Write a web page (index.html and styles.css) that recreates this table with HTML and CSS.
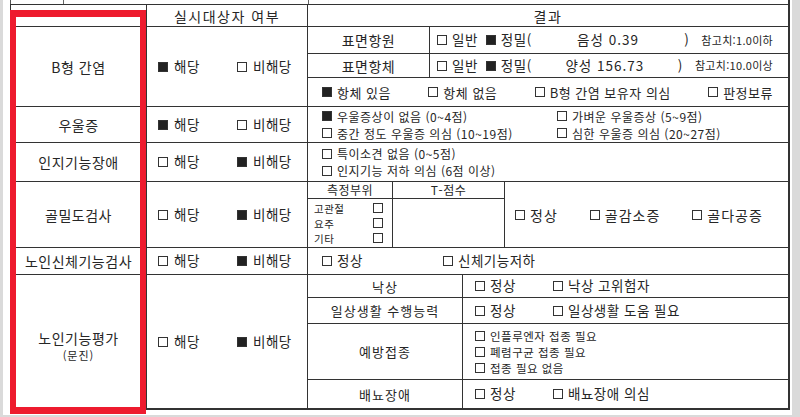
FILE: index.html
```html
<!DOCTYPE html>
<html lang="ko">
<head>
<meta charset="utf-8">
<title>검사 결과</title>
<link rel="stylesheet" href="styles.css">
</head>
<body>
<div class="page">
  <div class="strip"><i></i><i></i><i></i></div>
  <div class="form">
    <div class="c"></div>
    <div class="c head">실시대상자 여부</div>
    <div class="c head r3">결과</div>

    <div class="c lab">B형 간염</div>
    <div class="c yn"><span class="opt"><i class="cb on"></i>해당</span><span class="opt"><i class="cb"></i>비해당</span></div>
    <div class="c r3 sub">
      <div class="hb">
        <div class="sl">표면항원</div>
        <div class="sv">
          <span class="opt o1"><i class="cb"></i>일반</span><span class="opt"><i class="cb on"></i>정밀(</span>
          <span class="num">음성 0.39</span><span class="cp">)</span><span class="ref">참고치:1.0이하</span>
        </div>
        <div class="sl">표면항체</div>
        <div class="sv">
          <span class="opt o1"><i class="cb"></i>일반</span><span class="opt"><i class="cb on"></i>정밀(</span>
          <span class="num">양성 156.73</span><span class="cp">)</span><span class="ref">참고치:10.0이상</span>
        </div>
        <div class="hopts">
          <span class="opt"><i class="cb on"></i>항체 있음</span>
          <span class="opt"><i class="cb"></i>항체 없음</span>
          <span class="opt"><i class="cb"></i>B형 간염 보유자 의심</span>
          <span class="opt"><i class="cb"></i>판정보류</span>
        </div>
      </div>
    </div>

    <div class="c lab">우울증</div>
    <div class="c yn"><span class="opt"><i class="cb on"></i>해당</span><span class="opt"><i class="cb"></i>비해당</span></div>
    <div class="c r3 dep">
      <span class="opt"><i class="cb on"></i>우울증상이 없음 (0~4점)</span>
      <span class="opt"><i class="cb"></i>가벼운 우울증상 (5~9점)</span>
      <span class="opt"><i class="cb"></i>중간 정도 우울증 의심 (10~19점)</span>
      <span class="opt"><i class="cb"></i>심한 우울증 의심 (20~27점)</span>
    </div>

    <div class="c lab">인지기능장애</div>
    <div class="c yn"><span class="opt"><i class="cb"></i>해당</span><span class="opt"><i class="cb on"></i>비해당</span></div>
    <div class="c r3 cog">
      <span class="opt"><i class="cb"></i>특이소견 없음 (0~5점)</span>
      <span class="opt"><i class="cb"></i>인지기능 저하 의심 (6점 이상)</span>
    </div>

    <div class="c lab">골밀도검사</div>
    <div class="c yn"><span class="opt"><i class="cb"></i>해당</span><span class="opt"><i class="cb on"></i>비해당</span></div>
    <div class="c r3 sub">
      <div class="bone">
        <div class="bh">측정부위</div>
        <div class="bh">T-점수</div>
        <div class="bopts">
          <span class="opt"><i class="cb"></i>정상</span>
          <span class="opt"><i class="cb"></i>골감소증</span>
          <span class="opt"><i class="cb"></i>골다공증</span>
        </div>
        <div class="sites">
          <div class="site"><span>고관절</span><i class="cb"></i></div>
          <div class="site"><span>요주</span><i class="cb"></i></div>
          <div class="site"><span>기타</span><i class="cb"></i></div>
        </div>
        <div class="tscore"></div>
      </div>
    </div>

    <div class="c lab">노인신체기능검사</div>
    <div class="c yn"><span class="opt"><i class="cb"></i>해당</span><span class="opt"><i class="cb on"></i>비해당</span></div>
    <div class="c r3 phys">
      <span class="opt"><i class="cb"></i>정상</span>
      <span class="opt"><i class="cb"></i>신체기능저하</span>
    </div>

    <div class="c lab last elder">
      <span class="el1">노인기능평가</span>
      <span class="el2">(문진)</span>
    </div>
    <div class="c yn last"><span class="opt"><i class="cb"></i>해당</span><span class="opt"><i class="cb on"></i>비해당</span></div>
    <div class="c r3 last sub">
      <div class="old">
        <div class="ol">낙상</div>
        <div class="ov"><span class="opt"><i class="cb"></i>정상</span><span class="opt"><i class="cb"></i>낙상 고위험자</span></div>
        <div class="ol">일상생활 수행능력</div>
        <div class="ov"><span class="opt"><i class="cb"></i>정상</span><span class="opt"><i class="cb"></i>일상생활 도움 필요</span></div>
        <div class="ol">예방접종</div>
        <div class="ov vac">
          <span class="opt"><i class="cb"></i>인플루엔자 접종 필요</span>
          <span class="opt"><i class="cb"></i>폐렴구균 접종 필요</span>
          <span class="opt"><i class="cb"></i>접종 필요 없음</span>
        </div>
        <div class="ol end">배뇨장애</div>
        <div class="ov end"><span class="opt"><i class="cb"></i>정상</span><span class="opt"><i class="cb"></i>배뇨장애 의심</span></div>
      </div>
    </div>
  </div>
  <div class="highlight"></div>
</div>
</body>
</html>
```

FILE: styles.css
```css
* { box-sizing: border-box; }

body {
  margin: 0;
  padding: 0 8px 2px 3px;
  background: #dadada;
  font-family: "Noto Sans CJK KR", "Noto Sans", sans-serif;
  color: #262626;
}

.page {
  position: relative;
  width: 789px;
  height: 415px;
  background: #fff;
  padding-left: 7px;
}

.strip {
  display: grid;
  grid-template-columns: 53px 245px 1fr;
  width: 780px;
  height: 4px;
  border-left: 1px solid #555;
}
.strip i { border-right: 1px solid #666; }
.strip i:last-child { border-right: 2px solid #333; }

.form {
  display: grid;
  width: 780px;
  grid-template-columns: 136px 161px 1fr;
  grid-template-rows: 22px 80px 36px 39px 66px 27px 133px;
  border: 1px solid #333;
  border-right-width: 2px;
  border-bottom-width: 2px;
}

.c {
  border-right: 1px solid #333;
  border-bottom: 1px solid #333;
  display: flex;
  align-items: center;
  justify-content: center;
  font-size: 14px;
  line-height: 1;
  white-space: nowrap;
}
.c.r3 { border-right: 0; }
.c.last { border-bottom: 0; }

.head { letter-spacing: 1.5px; }

.lab { letter-spacing: 0.5px; }

.elder {
  flex-direction: column;
  padding-top: 8px;
}
.el1 { font-size: 14px; line-height: 20px; }
.el2 { font-size: 11px; line-height: 15px; letter-spacing: 1px; }

.opt {
  display: inline-flex;
  align-items: center;
}
.cb {
  display: inline-block;
  flex: none;
  width: 10px;
  height: 10px;
  border: 1px solid #333;
  margin-right: 5px;
}
.cb.on { background: #222; }

.yn {
  justify-content: flex-start;
  padding-left: 11px;
  font-size: 13.5px;
  letter-spacing: 0.5px;
}
.yn .opt:first-child { width: 79px; }
.yn .cb { margin-right: 6px; }

.sub { display: block; }

/* Hepatitis B */
.hb {
  display: grid;
  height: 100%;
  grid-template-columns: 122px 1fr;
  grid-template-rows: 27px 24px 1fr;
}
.sl {
  display: flex;
  align-items: center;
  justify-content: center;
  border-right: 1px solid #333;
  border-bottom: 1px solid #333;
  font-size: 14px;
  letter-spacing: 0.5px;
}
.sv {
  display: flex;
  align-items: center;
  border-bottom: 1px solid #333;
  padding: 0 15px 0 7px;
  font-size: 13.5px;
  letter-spacing: 0.5px;
}
.sv .o1 { margin-right: 8px; }
.sv .num {
  flex: 1;
  text-align: center;
  letter-spacing: 1px;
}
.sv .cp { margin-right: 12px; }
.sv .ref {
  font-size: 11px;
  letter-spacing: 0.3px;
}
.hopts {
  grid-column: 1 / 3;
  display: flex;
  align-items: center;
  justify-content: space-between;
  padding: 0 15px 0 14px;
  font-size: 13px;
  letter-spacing: 0.5px;
}

/* Depression */
.dep {
  display: grid;
  grid-template-columns: 235px auto;
  align-content: center;
  justify-content: start;
  padding-left: 14px;
  font-size: 12px;
  line-height: 17px;
  letter-spacing: 0.5px;
}

/* Cognitive */
.cog {
  flex-direction: column;
  align-items: flex-start;
  padding-left: 14px;
  font-size: 12px;
  line-height: 17px;
  letter-spacing: 0.5px;
}

/* Bone density */
.bone {
  display: grid;
  height: 100%;
  grid-template-columns: 85px 112px 1fr;
  grid-template-rows: 17px 1fr;
}
.bh {
  display: flex;
  align-items: center;
  justify-content: center;
  border-right: 1px solid #333;
  border-bottom: 1px solid #333;
  font-size: 12px;
  letter-spacing: 0.5px;
}
.bopts {
  grid-column: 3;
  grid-row: 1 / 3;
  display: flex;
  align-items: center;
  gap: 32px;
  padding-left: 10px;
  font-size: 14px;
  letter-spacing: 1px;
}
.sites {
  display: flex;
  flex-direction: column;
  justify-content: center;
  border-right: 1px solid #333;
  padding: 0 9px 0 6px;
}
.site {
  display: flex;
  justify-content: space-between;
  align-items: center;
  height: 15px;
}
.site span { font-size: 10.5px; line-height: 15px; letter-spacing: 0.5px; }
.site .cb { margin-right: 0; }
.tscore { border-right: 1px solid #333; }

/* Physical */
.phys {
  justify-content: flex-start;
  padding-left: 14px;
  font-size: 13.5px;
  letter-spacing: 0.5px;
}
.phys .opt:first-child { width: 121px; }

/* Elderly function */
.old {
  display: grid;
  height: 100%;
  grid-template-columns: 155px 1fr;
  grid-template-rows: 23px 26px 56px 1fr;
}
.ol {
  display: flex;
  align-items: center;
  justify-content: center;
  border-right: 1px solid #333;
  border-bottom: 1px solid #333;
  font-size: 13px;
  letter-spacing: 1px;
}
.ov {
  display: flex;
  align-items: center;
  border-bottom: 1px solid #333;
  padding-left: 12px;
  font-size: 13.5px;
  letter-spacing: 0.5px;
}
.ov .opt:first-child { width: 78px; }
.ov.vac {
  flex-direction: column;
  align-items: flex-start;
  justify-content: center;
  font-size: 11.5px;
  line-height: 16px;
}
.ov.vac .opt:first-child { width: auto; }
.end { border-bottom: 0; }

.highlight {
  position: absolute;
  left: 7px;
  top: 10px;
  width: 136px;
  height: 404px;
  border: 6px solid #ee1b2e;
  border-top-width: 7px;
  border-bottom-width: 7px;
  pointer-events: none;
}
```
